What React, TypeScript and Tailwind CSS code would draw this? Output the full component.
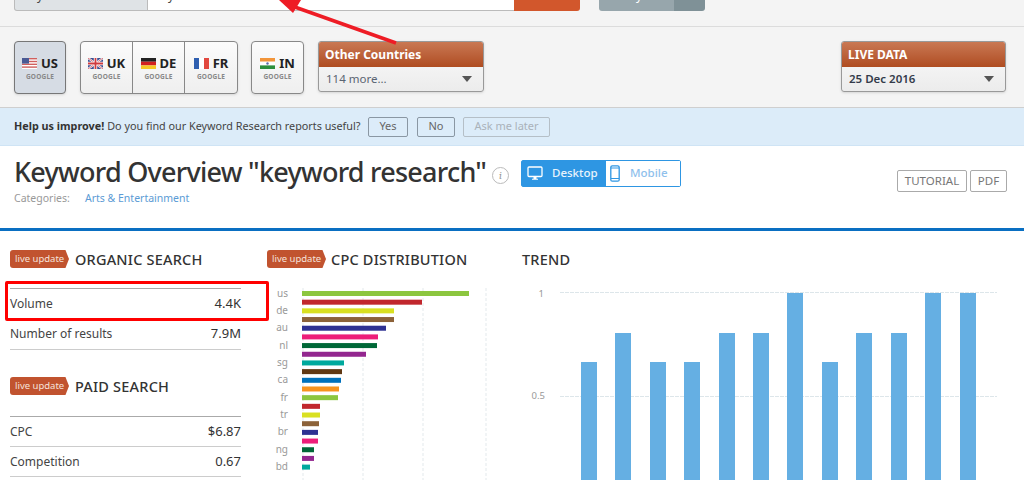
import React from 'react';

const font = { fontFamily: '"Noto Sans", "Open Sans", sans-serif' };

const cpcBars = [
  { w: 167, c: '#8cc63f', label: 'us' },
  { w: 120, c: '#c1272d' },
  { w: 92, c: '#d9e021', label: 'de' },
  { w: 92, c: '#8c6239' },
  { w: 84, c: '#2e3192', label: 'au' },
  { w: 76, c: '#ed1e79' },
  { w: 75, c: '#006837', label: 'nl' },
  { w: 64, c: '#93278f' },
  { w: 42, c: '#00a99d', label: 'sg' },
  { w: 40, c: '#603813' },
  { w: 39, c: '#0071bc', label: 'ca' },
  { w: 37, c: '#f7931e' },
  { w: 36, c: '#8cc63f', label: 'fr' },
  { w: 18, c: '#c1272d' },
  { w: 18, c: '#d9e021', label: 'tr' },
  { w: 17, c: '#8c6239' },
  { w: 16, c: '#2e3192', label: 'br' },
  { w: 16, c: '#ed1e79' },
  { w: 12, c: '#006837', label: 'ng' },
  { w: 12, c: '#93278f' },
  { w: 8, c: '#00a99d', label: 'bd' },
];

const trendBars = [
  { x: 59, y: 362 },
  { x: 93, y: 333 },
  { x: 128, y: 362 },
  { x: 162, y: 362 },
  { x: 197, y: 333 },
  { x: 231, y: 333 },
  { x: 265, y: 293 },
  { x: 300, y: 362 },
  { x: 334, y: 333 },
  { x: 369, y: 333 },
  { x: 403, y: 293 },
  { x: 438, y: 293 },
];

const Flag = ({ code }: { code: string }) => {
  if (code === 'US') {
    return (
      <svg width="15" height="11" viewBox="0 0 15 11">
        <rect width="15" height="11" fill="#fff" />
        <rect width="15" height="1.4" fill="#d0605e" />
        <rect y="2.8" width="15" height="1.4" fill="#d0605e" />
        <rect y="5.6" width="15" height="1.4" fill="#d0605e" />
        <rect y="8.4" width="15" height="1.4" fill="#d0605e" />
        <rect width="7" height="5.6" fill="#4a5a94" />
      </svg>
    );
  }
  if (code === 'UK') {
    return (
      <svg width="15" height="11" viewBox="0 0 15 11">
        <rect width="15" height="11" fill="#3c4f91" />
        <path d="M0 0L15 11M15 0L0 11" stroke="#fff" strokeWidth="2" />
        <path d="M0 0L15 11M15 0L0 11" stroke="#cf4a4f" strokeWidth="0.8" />
        <path d="M7.5 0V11M0 5.5H15" stroke="#fff" strokeWidth="3.4" />
        <path d="M7.5 0V11M0 5.5H15" stroke="#cf3a3f" strokeWidth="1.8" />
      </svg>
    );
  }
  if (code === 'DE') {
    return (
      <svg width="15" height="11" viewBox="0 0 15 11">
        <rect width="15" height="3.7" fill="#222" />
        <rect y="3.7" width="15" height="3.7" fill="#d3211f" />
        <rect y="7.4" width="15" height="3.6" fill="#f7c823" />
      </svg>
    );
  }
  if (code === 'FR') {
    return (
      <svg width="15" height="11" viewBox="0 0 15 11">
        <rect width="5" height="11" fill="#2f5fb0" />
        <rect x="5" width="5" height="11" fill="#fff" />
        <rect x="10" width="5" height="11" fill="#e2483f" />
      </svg>
    );
  }
  return (
    <svg width="15" height="11" viewBox="0 0 15 11">
      <rect width="15" height="3.7" fill="#f2953a" />
      <rect y="3.7" width="15" height="3.7" fill="#fff" />
      <rect y="7.4" width="15" height="3.6" fill="#2c8f3c" />
      <circle cx="7.5" cy="5.5" r="1.2" fill="#5a6aa8" />
    </svg>
  );
};

const CountryCell = ({ code, extra }: { code: string; extra: string }) => (
  <div className={`h-full flex flex-col items-center pt-[14px] ${extra}`}>
    <div className="flex items-center gap-[4px] h-[14px]">
      <Flag code={code} />
      <span className="text-[13px] font-bold text-[#222] leading-none">{code}</span>
    </div>
    <span className="text-[6.5px] font-bold text-[#888] leading-none mt-[4px] tracking-[0.2px]">GOOGLE</span>
  </div>
);

const Dropdown = ({ title, value, w, strong }: { title: string; value: string; w: string; strong?: boolean }) => (
  <div className={`${w} h-[51px] rounded-[3px] border border-[#999] flex flex-col overflow-hidden bg-gradient-to-b from-[#fbfbfb] to-[#ececec] shadow-sm`}>
    <div className="h-[25px] bg-gradient-to-b from-[#c97853] to-[#af4c20] text-white text-[12px] font-bold flex items-center pl-[6px]">
      {title}
    </div>
    <div className="flex-1 flex items-center justify-between pl-[7px] pr-[11px]">
      <span className={strong ? 'text-[11.5px] font-semibold text-[#333b4a]' : 'text-[11.5px] text-[#5a6472]'}>{value}</span>
      <span className="w-0 h-0 border-x-[5px] border-x-transparent border-t-[6px] border-t-[#555]" />
    </div>
  </div>
);

const LiveTag = () => (
  <span className="w-[59px] h-[18px] bg-[#c1532f] text-[#f6e3da] text-[9.5px] leading-[18px] pl-[5px] rounded-l-[3px] [clip-path:polygon(0_0,94%_0,100%_50%,94%_100%,0_100%)]">
    live update
  </span>
);

const Heading = ({ children }: { children: React.ReactNode }) => (
  <h3 className="text-[14.5px] font-medium text-[#333] leading-[18px] tracking-[0.2px]">{children}</h3>
);

const StatRow = ({ name, value, h }: { name: string; value: string; h: string }) => (
  <div className={`${h} flex items-center justify-between text-[12px] text-[#444] border-b border-[#ccc]`}>
    <span>{name}</span>
    <span className="text-[13px] text-[#333]">{value}</span>
  </div>
);

export default function App() {
  return (
    <div style={font} className="relative w-[1024px] h-[480px] overflow-hidden bg-white">
      {/* search bar, cut off by the top of the crop */}
      <div className="h-[27px] bg-[#f4f4f4] border-b border-[#dcdcdc] flex pl-[14px]">
        <div className="w-[134px] h-[11px] bg-[#dfe3e6] border border-t-0 border-[#bbb] rounded-bl-[3px] overflow-hidden relative">
          <span className="absolute left-[8px] top-[-10px] text-[12px] leading-none text-[#444]">Keyword</span>
        </div>
        <div className="w-[366px] h-[11px] bg-white border-b border-[#bbb] overflow-hidden relative">
          <span className="absolute left-[7px] top-[-10px] text-[12px] leading-none text-[#444]">keyword research</span>
        </div>
        <div className="w-[66px] h-[11px] bg-[#d2572c] rounded-br-[3px]" />
        <div className="ml-[19px] w-[75px] h-[11px] bg-[#97a6ac] rounded-bl-[3px] overflow-hidden relative">
          <span className="absolute left-[26px] top-[-10px] text-[12px] leading-none text-white">My</span>
        </div>
        <div className="w-[31px] h-[11px] bg-[#7f9197] rounded-br-[3px]" />
      </div>

      {/* database selector */}
      <div className="h-[80px] bg-[#f4f4f4] flex pt-[14px] pl-[14px] pr-[18px]">
        <div className="h-[53px] rounded-[4px] border border-[#777] bg-[#d6dce4] shadow-sm">
          <CountryCell code="US" extra="w-[50px]" />
        </div>
        <div className="ml-[14px] h-[53px] rounded-[4px] border border-[#888] bg-gradient-to-b from-[#fbfbfb] to-[#efefef] flex shadow-sm">
          <CountryCell code="UK" extra="w-[52px] border-r border-[#888]" />
          <CountryCell code="DE" extra="w-[52px] border-r border-[#888]" />
          <CountryCell code="FR" extra="w-[52px]" />
        </div>
        <div className="ml-[13px] h-[53px] rounded-[4px] border border-[#888] bg-gradient-to-b from-[#fbfbfb] to-[#efefef] shadow-sm">
          <CountryCell code="IN" extra="w-[51px]" />
        </div>
        <div className="ml-[14px]">
          <Dropdown title="Other Countries" value="114 more..." w="w-[166px]" />
        </div>
        <div className="ml-auto">
          <Dropdown title="LIVE DATA" value="25 Dec 2016" w="w-[165px]" strong />
        </div>
      </div>

      {/* feedback bar */}
      <div className="h-[39px] bg-[#dcecf9] border-t border-[#cfcfcf] border-b border-b-[#cfe4f5] flex items-center pl-[14px] text-[10.8px] text-[#444]">
        <div className="w-[354px] whitespace-nowrap">
          <b className="text-[#333] mr-[3px]">Help us improve!</b>
          <span>Do you find our Keyword Research reports useful?</span>
        </div>
        <button className="w-[40px] h-[20px] rounded-[2px] border border-[#8a97a3] text-[#666] text-[11px]">Yes</button>
        <button className="ml-[9px] w-[38px] h-[20px] rounded-[2px] border border-[#8a97a3] text-[#666] text-[11px]">No</button>
        <button className="ml-[8px] w-[87px] h-[20px] rounded-[2px] border border-[#b5bfc7] text-[#aab2b9] text-[11px]">Ask me later</button>
      </div>

      {/* title */}
      <div className="h-[85px] border-b-[3px] border-b-[#0a6fc2] flex pl-[14px] pr-[17px]">
        <div className="pt-[10px]">
          <div className="flex items-center h-[32px]">
            <h1 className="w-[472px] whitespace-nowrap text-[27px] leading-[32px] font-medium text-[#333] tracking-[-0.75px]">Keyword Overview "keyword research"</h1>
            <span className="ml-[6px] mt-[6px] w-[17px] h-[17px] rounded-full border border-[#bbb] text-[#999] text-[11px] italic font-serif leading-[15px] text-center">i</span>
            <div className="ml-[12px] mt-[2px] h-[27px] flex rounded-[2px] border border-[#2e96e3] text-[11.5px] font-medium">
              <div className="w-[84px] bg-[#2e96e3] text-[#e8f3fc] flex items-center pl-[5px] gap-[9px]">
                <svg width="16" height="15" viewBox="0 0 16 15" fill="none">
                  <rect x="1" y="1" width="14" height="9.5" rx="1" stroke="#fff" strokeWidth="1.3" />
                  <path d="M6.5 11v1.8H5v1h6v-1H9.5V11z" fill="#fff" />
                </svg>
                Desktop
              </div>
              <div className="w-[74px] bg-white text-[#8fc1ec] flex items-center pl-[4px] gap-[10px]">
                <svg width="10" height="17" viewBox="0 0 10 17" fill="none">
                  <rect x="0.8" y="0.8" width="8.4" height="15.4" rx="1.5" stroke="#2e96e3" strokeWidth="1.3" />
                  <path d="M1 13.5h8M1 3h8" stroke="#2e96e3" />
                </svg>
                Mobile
              </div>
            </div>
          </div>
          <div className="text-[10.5px] leading-[14px] text-[#999] flex mt-[3px]">
            <span className="w-[71px]">Categories:</span>
            <span className="text-[#5b9bd5]">Arts &amp; Entertainment</span>
          </div>
        </div>
        <div className="ml-auto flex gap-[3px] pt-[24px] text-[11.5px] text-[#777]">
          <span className="w-[70px] h-[22px] rounded-[2px] border border-[#aaa] flex items-center justify-center">TUTORIAL</span>
          <span className="w-[37px] h-[22px] rounded-[2px] border border-[#aaa] flex items-center justify-center">PDF</span>
        </div>
      </div>

      {/* report widgets */}
      <div className="flex pl-[10px] pt-[19px]">
        <div className="w-[231px]">
          <div className="flex items-center gap-[6px]">
            <LiveTag />
            <Heading>ORGANIC SEARCH</Heading>
          </div>
          <div className="mt-[20px] border-t border-[#aaa]">
            <StatRow name="Volume" value="4.4K" h="h-[30px]" />
            <StatRow name="Number of results" value="7.9M" h="h-[31px]" />
          </div>
          <div className="mt-[27px] flex items-center gap-[6px]">
            <LiveTag />
            <Heading>PAID SEARCH</Heading>
          </div>
          <div className="mt-[21px] border-t border-[#aaa]">
            <StatRow name="CPC" value="$6.87" h="h-[30px]" />
            <StatRow name="Competition" value="0.67" h="h-[30px]" />
          </div>
        </div>

        <div className="w-[255px] ml-[26px]">
          <div className="flex items-center gap-[5px]">
            <LiveTag />
            <Heading>CPC DISTRIBUTION</Heading>
          </div>
          <svg className="block mt-[20px]" width="255" height="200" viewBox="267 288 255 200">
            {[303, 363, 423, 486].map((x) => (
              <line key={x} x1={x} x2={x} y1="288" y2="488" stroke="#e3e9ec" strokeDasharray="3 2" />
            ))}
            {cpcBars.map((b, i) => (
              <g key={i}>
                <rect x="302" y={291 + i * 8.68} width={b.w} height="5" fill={b.c} />
                {b.label && (
                  <text x="288" y={296.5 + i * 8.68} textAnchor="end" fontSize="10" fill="#999">{b.label}</text>
                )}
              </g>
            ))}
          </svg>
        </div>

        <div className="flex-1">
          <Heading>TREND</Heading>
          <svg className="block mt-[20px]" width="502" height="200" viewBox="522 288 502 200">
            <line x1="560" x2="997" y1="292.5" y2="292.5" stroke="#dde6ea" strokeDasharray="4 1" />
            <line x1="560" x2="997" y1="396.5" y2="396.5" stroke="#dde6ea" strokeDasharray="4 1" />
            <text x="544" y="297" textAnchor="end" fontSize="9.5" fill="#999">1</text>
            <text x="545" y="399" textAnchor="end" fontSize="9.5" fill="#999">0.5</text>
            {trendBars.map((b) => (
              <rect key={b.x} x={b.x + 522} y={b.y} width="16" height={490 - b.y} fill="#65afe3" />
            ))}
          </svg>
        </div>
      </div>

      {/* annotations drawn over the screenshot */}
      <div className="absolute left-[5px] top-[281px] w-[264px] h-[40px] border-[3px] border-[#f00] rounded-[2px]" />
      <svg className="absolute left-0 top-0" width="1024" height="60">
        <line x1="396" y1="43" x2="292" y2="6" stroke="#ee1c25" strokeWidth="3.5" />
        <polygon points="279,0 301,0 293,13" fill="#ee1c25" />
      </svg>
    </div>
  );
}
